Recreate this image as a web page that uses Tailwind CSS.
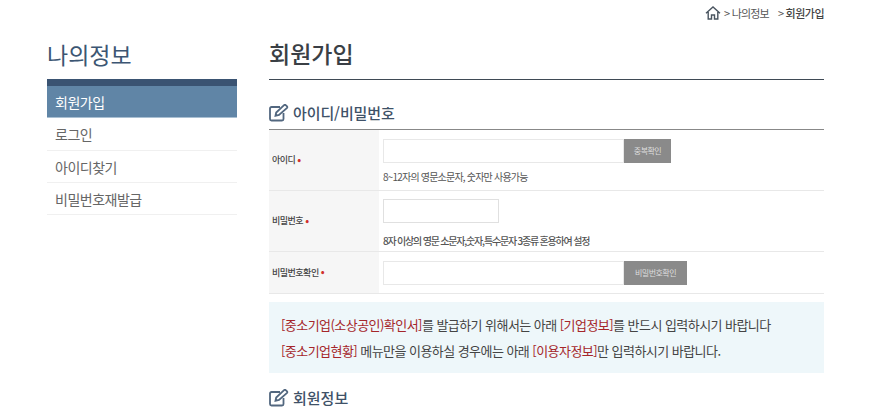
<!DOCTYPE html>
<html lang="ko">
<head>
<meta charset="utf-8">
<script src="https://cdn.jsdelivr.net/npm/@tailwindcss/browser@4"></script>
</head>
<body class="bg-white overflow-hidden">
<div class="w-[887px] h-[420px] overflow-hidden font-['Noto_Sans_CJK_KR','Noto_Sans',sans-serif] text-[#555] tracking-[-0.5px]">
  <div class="flex justify-end items-center h-[26px] pr-[63px] text-[11px] text-[#555]">
    <svg class="w-[16px] h-[14px] mr-[3px]" viewBox="0 0 16 14" fill="none" stroke="#4a5560" stroke-width="1.4"><path d="M1 7.200 8 1l7 6.200M3.200 6v7h3.300V9h3v4h3.300V6"/></svg>
    <span class="mr-[2px]">&gt;</span><span class="tracking-[-0.8px]">나의정보</span>
    <span class="ml-[9px] mr-[2px]">&gt;</span><span class="font-medium text-[#444]">회원가입</span>
  </div>
  <div class="flex pl-[47px]">
    <aside class="w-[190px] shrink-0">
      <h2 class="text-[23px] leading-[34px] h-[53px] mt-[11px] text-[#3c5673] font-normal tracking-normal -mb-[11px]">나의정보</h2>
      <div class="h-[7px] bg-[#3a5372]"></div>
      <div class="h-[32px] bg-[#6085a6] text-white text-[14px] leading-[32px] pl-[8px] border-b border-[#a9bfd2]">회원가입</div>
      <div class="h-[33px] text-[14px] leading-[33px] pl-[8px] border-b border-[#f0f0f0] text-[#666]">로그인</div>
      <div class="h-[32px] text-[14px] leading-[32px] pl-[8px] border-b border-[#f0f0f0] text-[#666]">아이디찾기</div>
      <div class="h-[32px] text-[14px] leading-[32px] pl-[8px] border-b border-[#f0f0f0] text-[#666]">비밀번호재발급</div>
    </aside>
    <main class="ml-[32px] w-[555px] shrink-0">
      <h1 class="h-[54px] pt-[10px] text-[23px] leading-[34px] font-medium text-[#3a3f45] border-b border-[#3f4a55] -mb-[1px] tracking-normal">회원가입</h1>
      <div class="h-[50px] flex items-center pt-[18px] gap-[4px] text-[#3f5268]">
        <svg class="w-[20px] h-[18px]" viewBox="0 0 20 18" fill="none" stroke="#52677f" stroke-width="1.8"><path d="M11 3H2.500A1.500 1.500 0 0 0 1 4.500V15a1.500 1.500 0 0 0 1.500 1.500H13a1.500 1.500 0 0 0 1.500-1.500V9"/><path d="M6.500 11.800 7.200 8.500 14.800 1.300a1.500 1.500 0 0 1 2.200 0l.8.8a1.500 1.500 0 0 1 0 2.100L10 11z"/></svg>
        <h3 class="text-[15px] leading-[24px] font-medium tracking-[-0.1px]">아이디/비밀번호</h3>
      </div>
      <div class="border-t border-[#888]">
        <div class="flex h-[61px] border-b border-[#e8e8e8]">
          <div class="w-[110px] bg-[#f6f6f6] pl-[3px] flex items-center text-[9px] font-medium text-[#444]">아이디<span class="text-[#d0312d] text-[11px] leading-none ml-[2px] -mt-[2px]">•</span></div>
          <div class="pl-[4px] pt-[9px]">
            <div class="flex">
              <div class="w-[241px] h-[24px] bg-white border border-[#e8e8e8]"></div>
              <div class="w-[47px] h-[24px] bg-[#8a8a8a] text-[#ddd] text-[8px] leading-[24px] text-center">중복확인</div>
            </div>
            <p class="text-[10px] mt-[7px] leading-[14px] tracking-[-0.8px] text-[#555]">8~12자의 영문소문자, 숫자만 사용가능</p>
          </div>
        </div>
        <div class="flex h-[61px] border-b border-[#e8e8e8]">
          <div class="w-[110px] bg-[#f6f6f6] pl-[3px] flex items-center text-[9px] font-medium text-[#444]">비밀번호<span class="text-[#d0312d] text-[11px] leading-none ml-[2px] -mt-[2px]">•</span></div>
          <div class="pl-[4px] pt-[8px]">
            <div class="w-[116px] h-[24px] bg-white border border-[#e0e0e0]"></div>
            <p class="text-[10px] mt-[11px] leading-[14px] tracking-[-1.2px] font-medium text-[#555]">8자 이상의 영문 소문자,숫자,특수문자 3종류 혼용하여 설정</p>
          </div>
        </div>
        <div class="flex h-[42px] border-b border-[#e8e8e8]">
          <div class="w-[110px] bg-[#f6f6f6] pl-[3px] flex items-center text-[9px] font-medium text-[#444]">비밀번호확인<span class="text-[#d0312d] text-[11px] leading-none ml-[2px] -mt-[2px]">•</span></div>
          <div class="pl-[4px] pt-[9px]">
            <div class="flex">
              <div class="w-[241px] h-[24px] bg-white border border-[#e8e8e8]"></div>
              <div class="w-[63px] h-[24px] bg-[#8a8a8a] text-[#ddd] text-[8px] leading-[24px] text-center">비밀번호확인</div>
            </div>
          </div>
        </div>
      </div>
      <div class="mt-[8px] h-[71px] bg-[#eef7fa] pl-[12px] pt-[10px] text-[13px] leading-[26px] text-[#444] tracking-[-0.55px]">
        <p><span class="text-[#a5262a]">[중소기업(소상공인)확인서]</span>를 발급하기 위해서는 아래 <span class="text-[#a5262a]">[기업정보]</span>를 반드시 입력하시기 바랍니다</p>
        <p><span class="text-[#a5262a]">[중소기업현황]</span> 메뉴만을 이용하실 경우에는 아래 <span class="text-[#a5262a]">[이용자정보]</span>만 입력하시기 바랍니다.</p>
      </div>
      <div class="h-[50px] flex items-center gap-[4px] text-[#3f5268]">
        <svg class="w-[20px] h-[18px]" viewBox="0 0 20 18" fill="none" stroke="#52677f" stroke-width="1.8"><path d="M11 3H2.500A1.500 1.500 0 0 0 1 4.500V15a1.500 1.500 0 0 0 1.500 1.500H13a1.500 1.500 0 0 0 1.500-1.500V9"/><path d="M6.500 11.800 7.200 8.500 14.800 1.300a1.500 1.500 0 0 1 2.200 0l.8.8a1.500 1.500 0 0 1 0 2.100L10 11z"/></svg>
        <h3 class="text-[15px] leading-[24px] font-medium tracking-normal">회원정보</h3>
      </div>
    </main>
  </div>
</div>
</body>
</html>
